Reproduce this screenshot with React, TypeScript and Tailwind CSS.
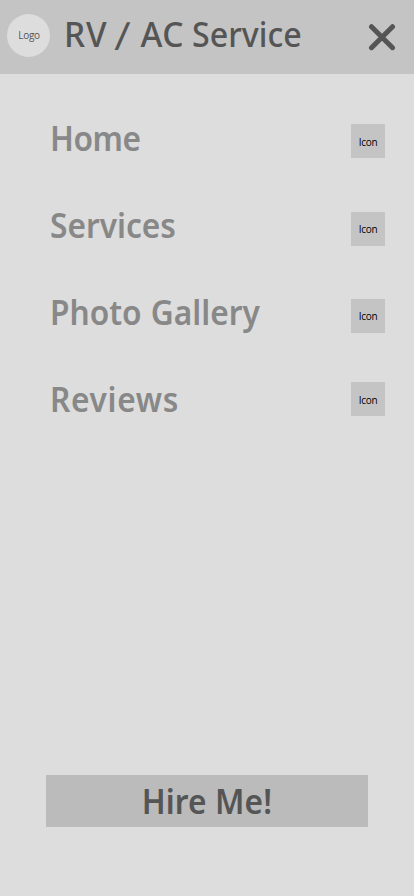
import React from "react";

type MenuItem = { label: string; text: string; icon: string };

const items: MenuItem[] = [
  { label: "Home", text: "tracking-[-0.5px] origin-left scale-x-[0.945]", icon: "mt-[27px] pt-px" },
  { label: "Services", text: "tracking-[0px] origin-left scale-x-[0.945]", icon: "mt-[28px]" },
  { label: "Photo Gallery", text: "tracking-[0px] origin-left scale-x-[0.945] [word-spacing:1px]", icon: "mt-[28px]" },
  { label: "Reviews", text: "tracking-[0.7px] origin-left scale-x-[0.945]", icon: "mt-[24px] pt-px" },
];

function CloseIcon() {
  return (
    <svg width="28" height="28" viewBox="0 0 28 28" fill="none" stroke="#555555" strokeWidth="5" strokeLinecap="round">
      <path d="M3.5 3.7 24.5 24.7M24.5 3.7 3.5 24.7" />
    </svg>
  );
}

export default function App() {
  return (
    <div className="flex h-[896px] w-[414px] flex-col overflow-hidden bg-[#dddddd] font-['Noto_Sans',sans-serif]">
      <header className="flex h-[74px] shrink-0 items-start bg-[#c4c4c4] text-[#555555]">
        <div className="mt-[14px] ml-[7px] flex h-[43px] w-[43px] shrink-0 items-center justify-center rounded-full bg-[#dddddd] pb-[2px] pl-px font-['Open_Sans',sans-serif] text-[10px] leading-none font-medium tracking-[-0.3px]">
          <span>Logo</span>
        </div>
        <h1 className="mt-[10px] ml-[14px] flex w-[288px] text-[33.5px] leading-[48px] font-medium whitespace-nowrap">
          <span className="w-[52px] tracking-[0.8px]">RV</span>
          <span className="mt-[1px] w-[24.5px] origin-center scale-y-[1.16] -skew-x-8">/</span>
          <span className="w-[51.5px] tracking-[0.4px]">AC</span>
          <span className="origin-left scale-x-[0.96] tracking-[0px]">Service</span>
        </h1>
        <button className="mt-[23px] ml-[16px] shrink-0" aria-label="Close">
          <CloseIcon />
        </button>
      </header>
      <nav className="mt-[23px] flex flex-col pr-[29px] pl-[49.5px]">
        {items.map((item) => (
          <a key={item.label} className="flex h-[87px] items-start justify-between">
            <span className={`mt-[17px] text-[33.5px] leading-[48px] font-semibold whitespace-nowrap text-[#888888] ${item.text}`}>
              {item.label}
            </span>
            <span className={`flex h-[34px] w-[34px] items-center justify-center bg-[#c4c4c4] font-['Open_Sans',sans-serif] text-[10px] leading-none font-medium tracking-[-0.3px] text-black ${item.icon}`}>
              Icon
            </span>
          </a>
        ))}
      </nav>
      <button className="mt-auto mb-[69px] ml-[46px] flex h-[52px] w-[322px] items-center justify-center bg-[#bbbbbb] text-[33.5px] leading-[48px] font-semibold text-[#555555]">
        <span className="scale-x-[0.945] tracking-[0.1px]">Hire Me!</span>
      </button>
    </div>
  );
}
